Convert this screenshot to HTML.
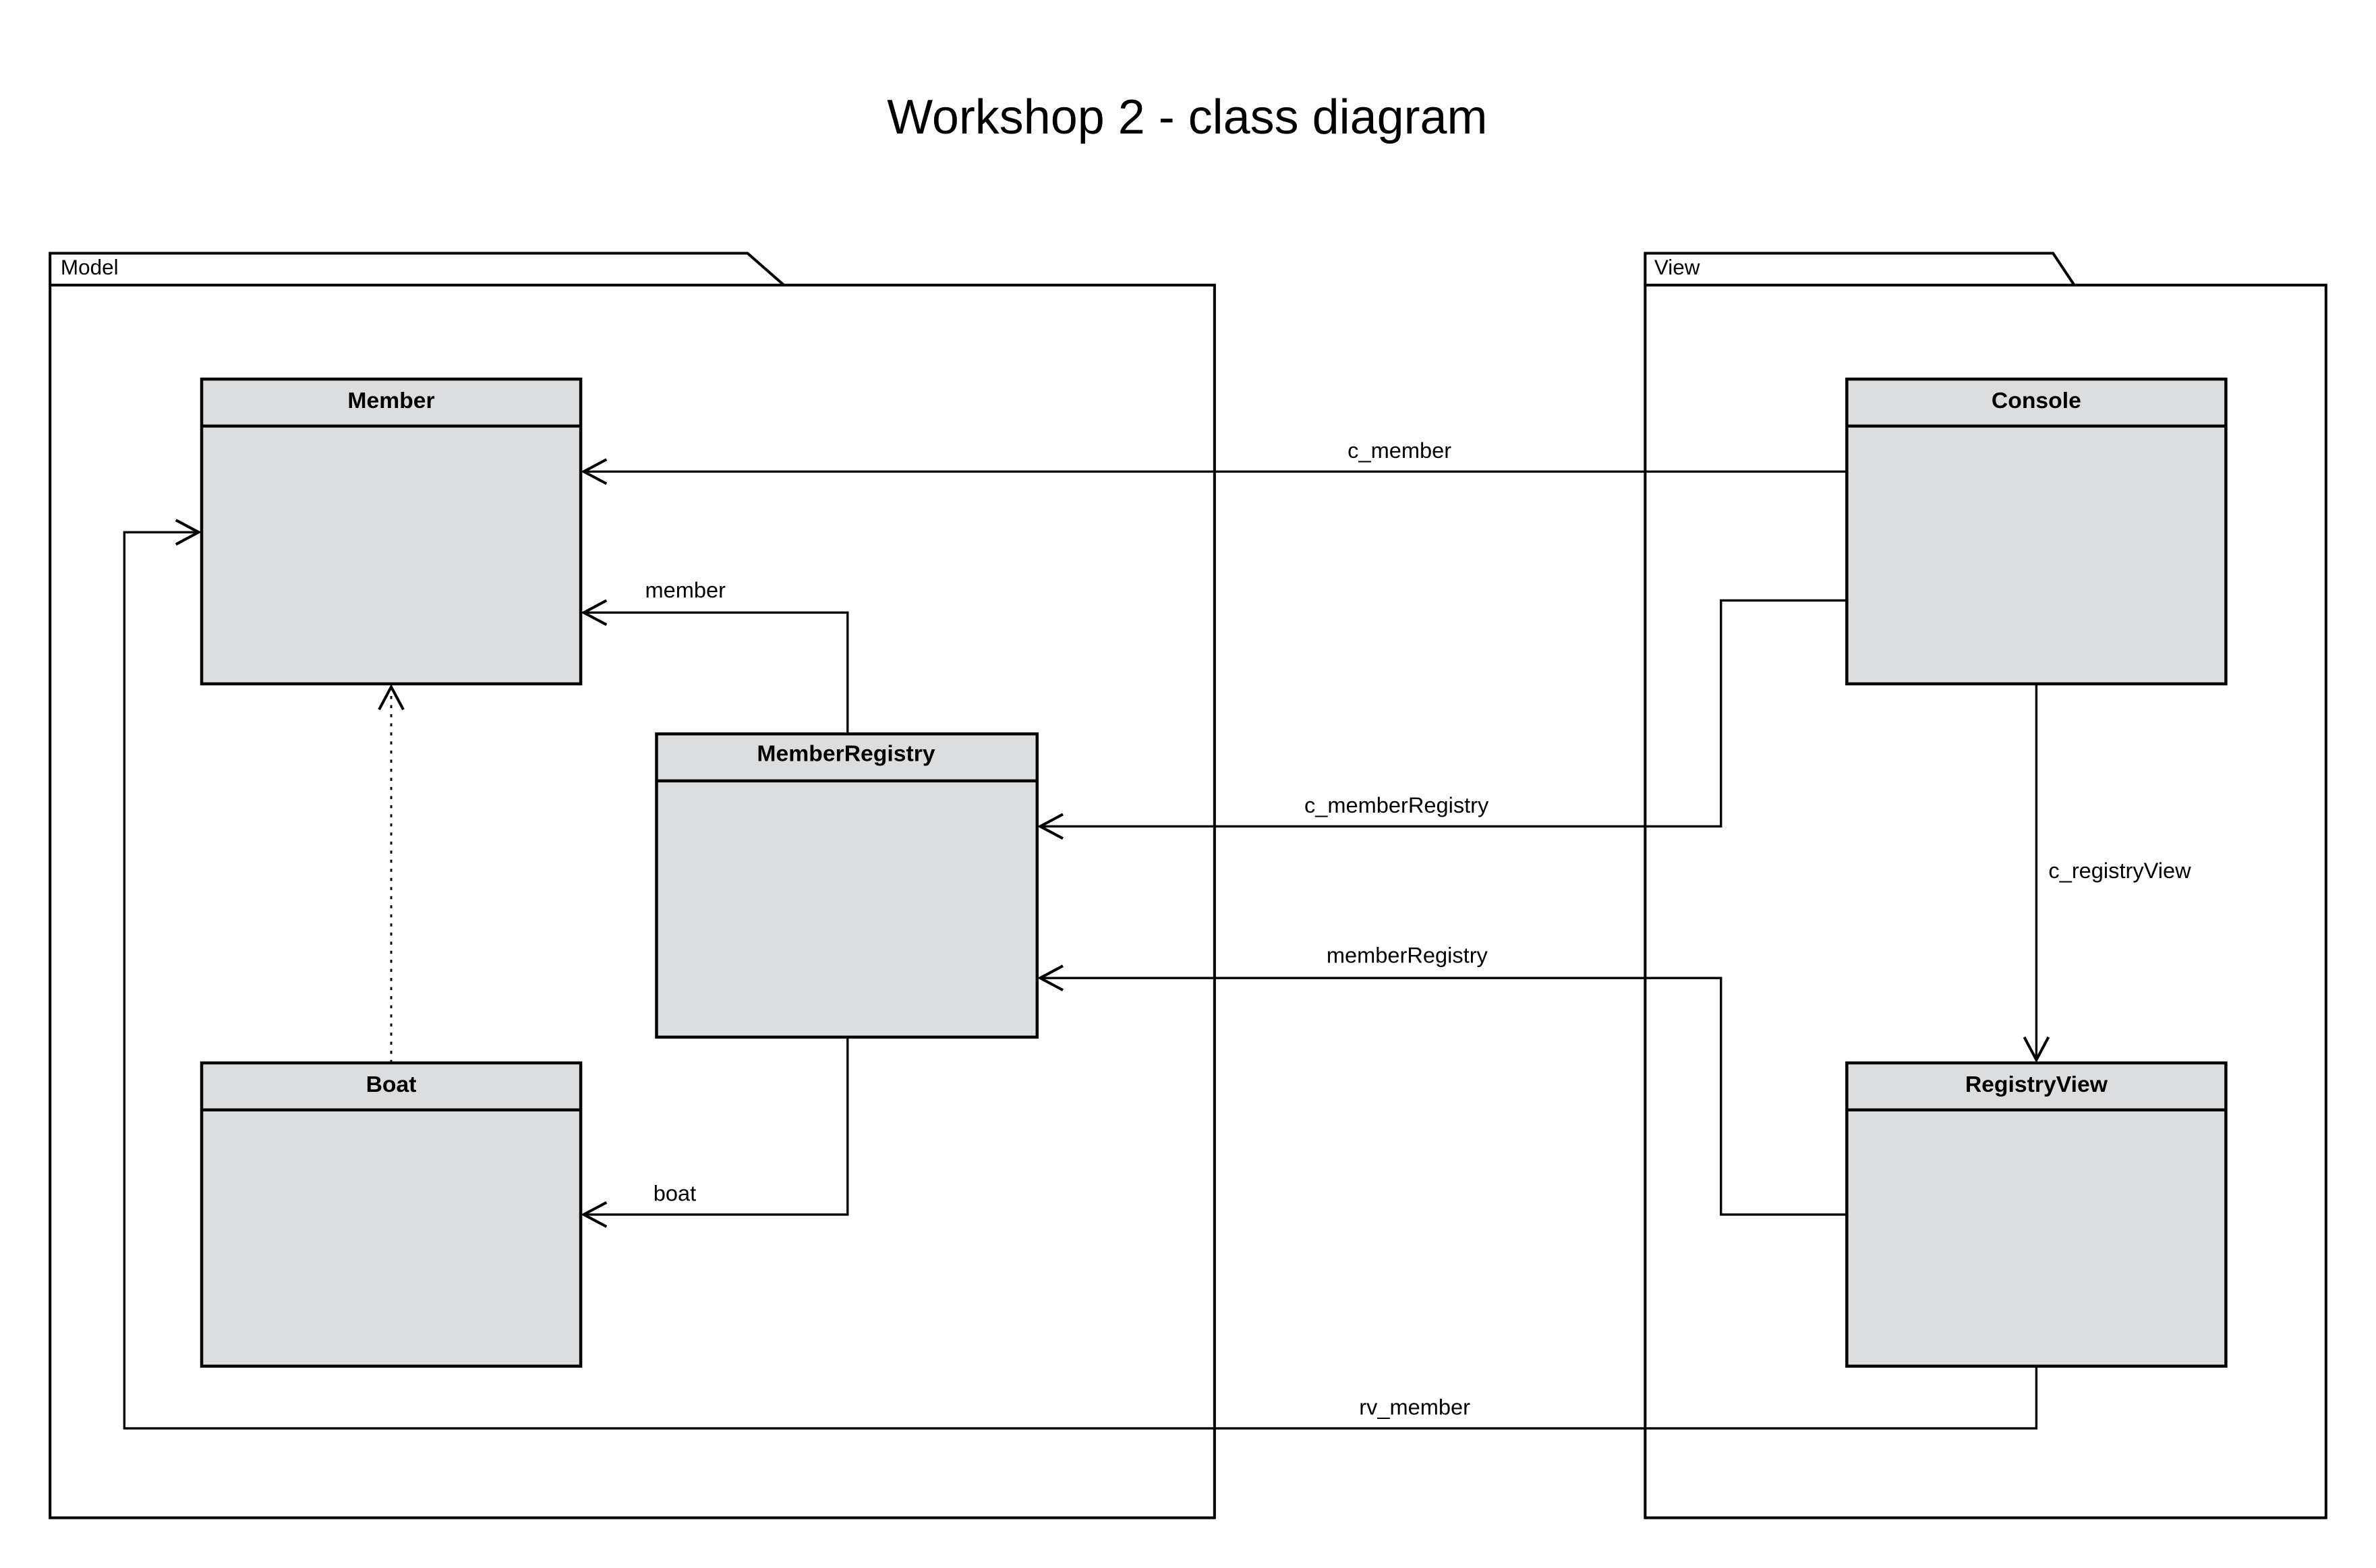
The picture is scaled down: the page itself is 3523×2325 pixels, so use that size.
<!DOCTYPE html>
<html><head><meta charset="utf-8"><style>
html,body{margin:0;padding:0;background:#fff;}
svg{display:block;}
text{font-family:"Liberation Sans",sans-serif;fill:#000;}
</style></head><body>
<svg width="3523" height="2325" viewBox="0 0 1567 1034.1" xmlns="http://www.w3.org/2000/svg">
<rect x="0" y="0" width="1567" height="1034.1" fill="#fff"/>
<text x="783" y="88" font-size="32" text-anchor="middle">Workshop 2 - class diagram</text>

<g fill="none" stroke="#000" stroke-width="1.8">
<path d="M33,188 L33,167 L493,167 L517,188"/>
<rect x="33" y="188" width="768" height="813"/>
<path d="M1085,188 L1085,167 L1354,167 L1368,188"/>
<rect x="1085" y="188" width="449" height="813"/>
</g>
<text x="40" y="181" font-size="14">Model</text>
<text x="1091" y="181" font-size="14">View</text>

<g fill="none" stroke="#000" stroke-width="1.5">
<path d="M1218,311 L385,311"/>
<path d="M1343,901 L1343,942 L82,942 L82,351 L131,351"/>
<path d="M559,484 L559,404 L385,404"/>
<path d="M559,684 L559,801 L385,801"/>
<path d="M258,701 L258,455" stroke-dasharray="2,4" stroke-width="1.3"/>
<path d="M1218,396 L1135,396 L1135,545 L686,545"/>
<path d="M1218,801 L1135,801 L1135,645 L686,645"/>
<path d="M1343,451 L1343,699"/>
</g>
<g fill="none" stroke="#000" stroke-width="1.8">
<path d="M400,303 L385,311 L400,319"/>
<path d="M116,343 L131,351 L116,359"/>
<path d="M400,396 L385,404 L400,412"/>
<path d="M400,793 L385,801 L400,809"/>
<path d="M250,468 L258,453 L266,468"/>
<path d="M701,537 L686,545 L701,553"/>
<path d="M701,637 L686,645 L701,653"/>
<path d="M1335,684 L1343,699 L1351,684"/>
</g>

<g fill="#dcdddf" stroke="#000" stroke-width="2">
<rect x="133" y="250" width="250" height="201"/>
<line x1="133" y1="281" x2="383" y2="281"/>
<rect x="433" y="484" width="251" height="200"/>
<line x1="433" y1="515" x2="684" y2="515"/>
<rect x="133" y="701" width="250" height="200"/>
<line x1="133" y1="732" x2="383" y2="732"/>
<rect x="1218" y="250" width="250" height="201"/>
<line x1="1218" y1="281" x2="1468" y2="281"/>
<rect x="1218" y="701" width="250" height="200"/>
<line x1="1218" y1="732" x2="1468" y2="732"/>
</g>
<g font-size="15" font-weight="bold" text-anchor="middle">
<text x="258" y="269">Member</text>
<text x="558" y="502">MemberRegistry</text>
<text x="258" y="720">Boat</text>
<text x="1343" y="269">Console</text>
<text x="1343" y="720">RegistryView</text>
</g>
<g font-size="14.5" text-anchor="middle">
<text x="923" y="302">c_member</text>
<text x="933" y="933">rv_member</text>
<text x="452" y="394">member</text>
<text x="445" y="792">boat</text>
<text x="921" y="536">c_memberRegistry</text>
<text x="928" y="635">memberRegistry</text>
<text x="1398" y="579">c_registryView</text>
</g>
</svg>
</body></html>
